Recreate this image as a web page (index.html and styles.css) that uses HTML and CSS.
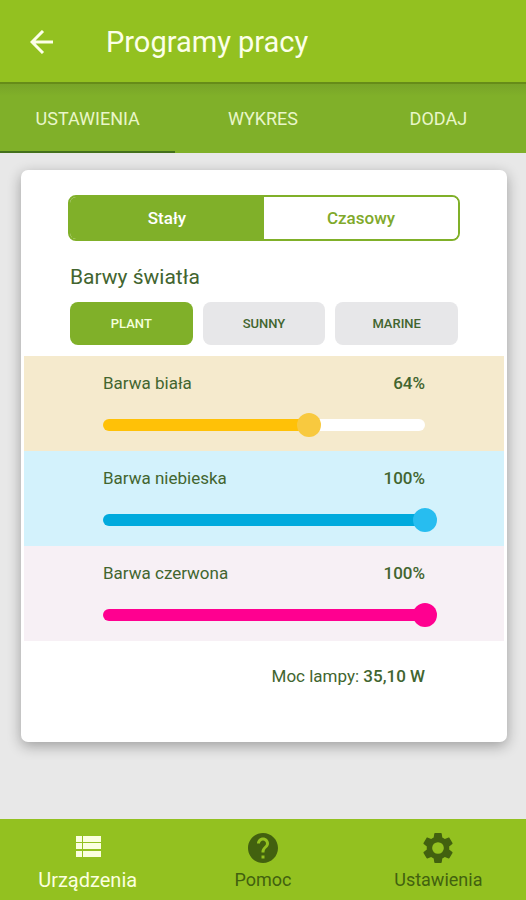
FILE: index.html
```html
<!DOCTYPE html>
<html lang="pl">
<head>
    <meta charset="UTF-8">
    <meta name="viewport" content="width=device-width, initial-scale=1.0">
    <title>Programy pracy</title>
    <link rel="stylesheet" href="styles.css">
</head>
<body>
<header class="top-bar">
    <button class="back-button" type="button" aria-label="Wstecz">
        <svg viewBox="0 0 24 24" width="24" height="24" fill="none" stroke="currentColor" stroke-width="3">
            <path d="M13 1L2 12L13 23M2 12H23"/>
        </svg>
    </button>
    <h1>Programy pracy</h1>
</header>

<nav class="tabs">
    <a href="#ustawienia" class="active">USTAWIENIA</a>
    <a href="#wykres">WYKRES</a>
    <a href="#dodaj">DODAJ</a>
</nav>

<main class="content">
    <div class="card">
        <div class="mode-switch">
            <button type="button" class="active">Stały</button>
            <button type="button">Czasowy</button>
        </div>

        <h2>Barwy światła</h2>
        <div class="presets">
            <button type="button" class="active">PLANT</button>
            <button type="button">SUNNY</button>
            <button type="button">MARINE</button>
        </div>

        <div class="channel white">
            <div class="channel-head">
                <label for="white">Barwa biała</label>
                <output for="white">64%</output>
            </div>
            <input type="range" id="white" min="0" max="100" value="64" style="--value: 64%">
        </div>
        <div class="channel blue">
            <div class="channel-head">
                <label for="blue">Barwa niebieska</label>
                <output for="blue">100%</output>
            </div>
            <input type="range" id="blue" min="0" max="100" value="100" style="--value: 100%">
        </div>
        <div class="channel red">
            <div class="channel-head">
                <label for="red">Barwa czerwona</label>
                <output for="red">100%</output>
            </div>
            <input type="range" id="red" min="0" max="100" value="100" style="--value: 100%">
        </div>

        <p class="power">Moc lampy: <strong>35,10 W</strong></p>
    </div>
</main>

<nav class="bottom-bar">
    <a href="#urzadzenia" class="active">
        <svg viewBox="0 0 30 30" width="30" height="30" fill="currentColor">
            <path d="M3 3H9V9H3zM10 3H28V9H10zM3 10H9V16H3zM10 10H28V16H10zM3 18H9V24H3zM10 18H28V24H10z"/>
        </svg>
        <span>Urządzenia</span>
    </a>
    <a href="#pomoc">
        <svg viewBox="2 2 20 20" width="30" height="30" fill="currentColor">
            <path d="M12 2C6.48 2 2 6.48 2 12s4.48 10 10 10 10-4.48 10-10S17.52 2 12 2zm1 17h-2v-2h2v2zm2.07-7.75l-.9.92C13.45 12.9 13 13.5 13 15h-2v-.5c0-1.1.45-2.1 1.17-2.83l1.24-1.26c.37-.36.59-.86.59-1.41 0-1.1-.9-2-2-2s-2 .9-2 2H8c0-2.21 1.79-4 4-4s4 1.79 4 4c0 .88-.36 1.68-.93 2.25z"/>
        </svg>
        <span>Pomoc</span>
    </a>
    <a href="#opcje">
        <svg viewBox="2 2 20 20" width="30" height="30" fill="currentColor">
            <path d="M19.43 12.98c.04-.32.07-.64.07-.98s-.03-.66-.07-.98l2.11-1.65c.19-.15.24-.42.12-.64l-2-3.46c-.12-.22-.39-.3-.61-.22l-2.49 1c-.52-.4-1.08-.73-1.69-.98l-.38-2.65C14.46 2.18 14.25 2 14 2h-4c-.25 0-.46.18-.49.42l-.38 2.65c-.61.25-1.17.59-1.69.98l-2.49-1c-.23-.09-.49 0-.61.22l-2 3.46c-.13.22-.07.49.12.64l2.11 1.65c-.04.32-.07.65-.07.98s.03.66.07.98l-2.11 1.65c-.19.15-.24.42-.12.64l2 3.46c.12.22.39.3.61.22l2.49-1c.52.4 1.08.73 1.69.98l.38 2.65c.03.24.24.42.49.42h4c.25 0 .46-.18.49-.42l.38-2.65c.61-.25 1.17-.59 1.69-.98l2.49 1c.23.09.49 0 .61-.22l2-3.46c.12-.22.07-.49-.12-.64l-2.11-1.65zM12 15.9A3.9 3.9 0 1 1 12 8.1a3.9 3.9 0 0 1 0 7.8z"/>
        </svg>
        <span>Ustawienia</span>
    </a>
</nav>

<script>
    document.querySelectorAll('.channel').forEach(function (channel) {
        const slider = channel.querySelector('input');
        const output = channel.querySelector('output');
        slider.addEventListener('input', () => {
            slider.style.setProperty('--value', slider.value + '%');
            output.textContent = slider.value + '%';
        });
    });
</script>
</body>
</html>
```
FILE: styles.css
```css
* {
    box-sizing: border-box;
}
body {
    font-family: Roboto, sans-serif;
    margin: 0;
    min-height: 100vh;
    display: flex;
    flex-direction: column;
    color: #42652f;
    background-color: #e8e8e8;
}
button {
    font-family: inherit;
    border: none;
    cursor: pointer;
}
a {
    text-decoration: none;
}

/* Header */
.top-bar {
    display: flex;
    align-items: center;
    gap: 52px;
    height: 84px;
    padding: 2px 30px 0;
    background: #93c120;
    border-bottom: 2px solid #668c18;
    color: #fcffe8;
}
.back-button {
    display: flex;
    padding: 0;
    background: none;
    color: inherit;
}
h1 {
    margin: 0;
    font-size: 29px;
    font-weight: 400;
}
.tabs {
    display: grid;
    grid-template-columns: repeat(3, 1fr);
    height: 69px;
    background: linear-gradient(#78a428, #80b029 12px);
}
.tabs a {
    display: flex;
    align-items: center;
    justify-content: center;
    border-top: 2px solid transparent;
    border-bottom: 2px solid transparent;
    font-size: 18px;
    color: #e9f6c8;
}
.tabs .active {
    border-bottom-color: #44701c;
}

/* Card */
.content {
    flex: 1;
    padding: 17px 19px 76px 21px;
}
.card {
    padding: 25px 3px 55px;
    background: #fff;
    border-radius: 7px;
    box-shadow: 0 4px 14px rgba(0, 0, 0, 0.32);
}
.mode-switch {
    display: grid;
    grid-template-columns: 1fr 1fr;
    height: 46px;
    margin: 0 44px;
    border: 2px solid #80b029;
    border-radius: 8px;
    overflow: hidden;
}
.mode-switch button {
    background: #fff;
    color: #80a92b;
    font-size: 17px;
    font-weight: 500;
}
.mode-switch .active {
    background: #80b029;
    color: #fff;
}
h2 {
    margin: 23px 46px 11px;
    font-size: 21px;
    line-height: 27px;
    font-weight: 400;
}
.presets {
    display: grid;
    grid-template-columns: repeat(3, 1fr);
    gap: 10px;
    margin: 0 46px 11px;
}
.presets button {
    height: 43px;
    border-radius: 8px;
    background: #e7e7e9;
    color: #42652f;
    font-size: 13px;
    font-weight: 500;
}
.presets .active {
    background: #80b029;
    color: #f4ffdc;
}

/* Light channels */
.channel {
    padding: 17px 79px 20px;
}
.channel-head {
    display: flex;
    justify-content: space-between;
    margin-bottom: 25px;
    font-size: 17px;
    line-height: 21px;
}
.channel output {
    font-weight: 500;
}
.channel input {
    appearance: none;
    display: block;
    width: 100%;
    height: 12px;
    margin: 0;
    border-radius: 6px;
    background: linear-gradient(to right, var(--fill) var(--value), #fff var(--value));
}
/* The track is wider than the bar, so the thumb is centred on the bar's ends */
.channel input::-webkit-slider-runnable-track {
    height: 24px;
    margin: 0 -12px;
}
.channel input::-webkit-slider-thumb {
    appearance: none;
    width: 24px;
    height: 24px;
    border-radius: 50%;
    background: var(--thumb);
}
.white {
    --fill: #ffc107;
    --thumb: #f8c93f;
    background: #f5eacd;
}
.blue {
    --fill: #00aadd;
    --thumb: #27bdf0;
    background: #d3f2fc;
}
.red {
    --fill: #ff0090;
    --thumb: #ff0090;
    background: #f7f0f5;
}
.power {
    margin: 25px 79px 0;
    font-size: 17px;
    line-height: 21px;
    text-align: right;
}
.power strong {
    font-weight: 500;
}

/* Bottom navigation */
.bottom-bar {
    display: grid;
    grid-template-columns: repeat(3, 1fr);
    height: 81px;
    background: #93c120;
}
.bottom-bar a {
    display: flex;
    flex-direction: column;
    align-items: center;
    gap: 6px;
    padding-top: 14px;
    font-size: 18px;
    line-height: 22px;
    color: #42610f;
}
.bottom-bar .active {
    font-size: 20px;
    color: #fbffdf;
}
```
